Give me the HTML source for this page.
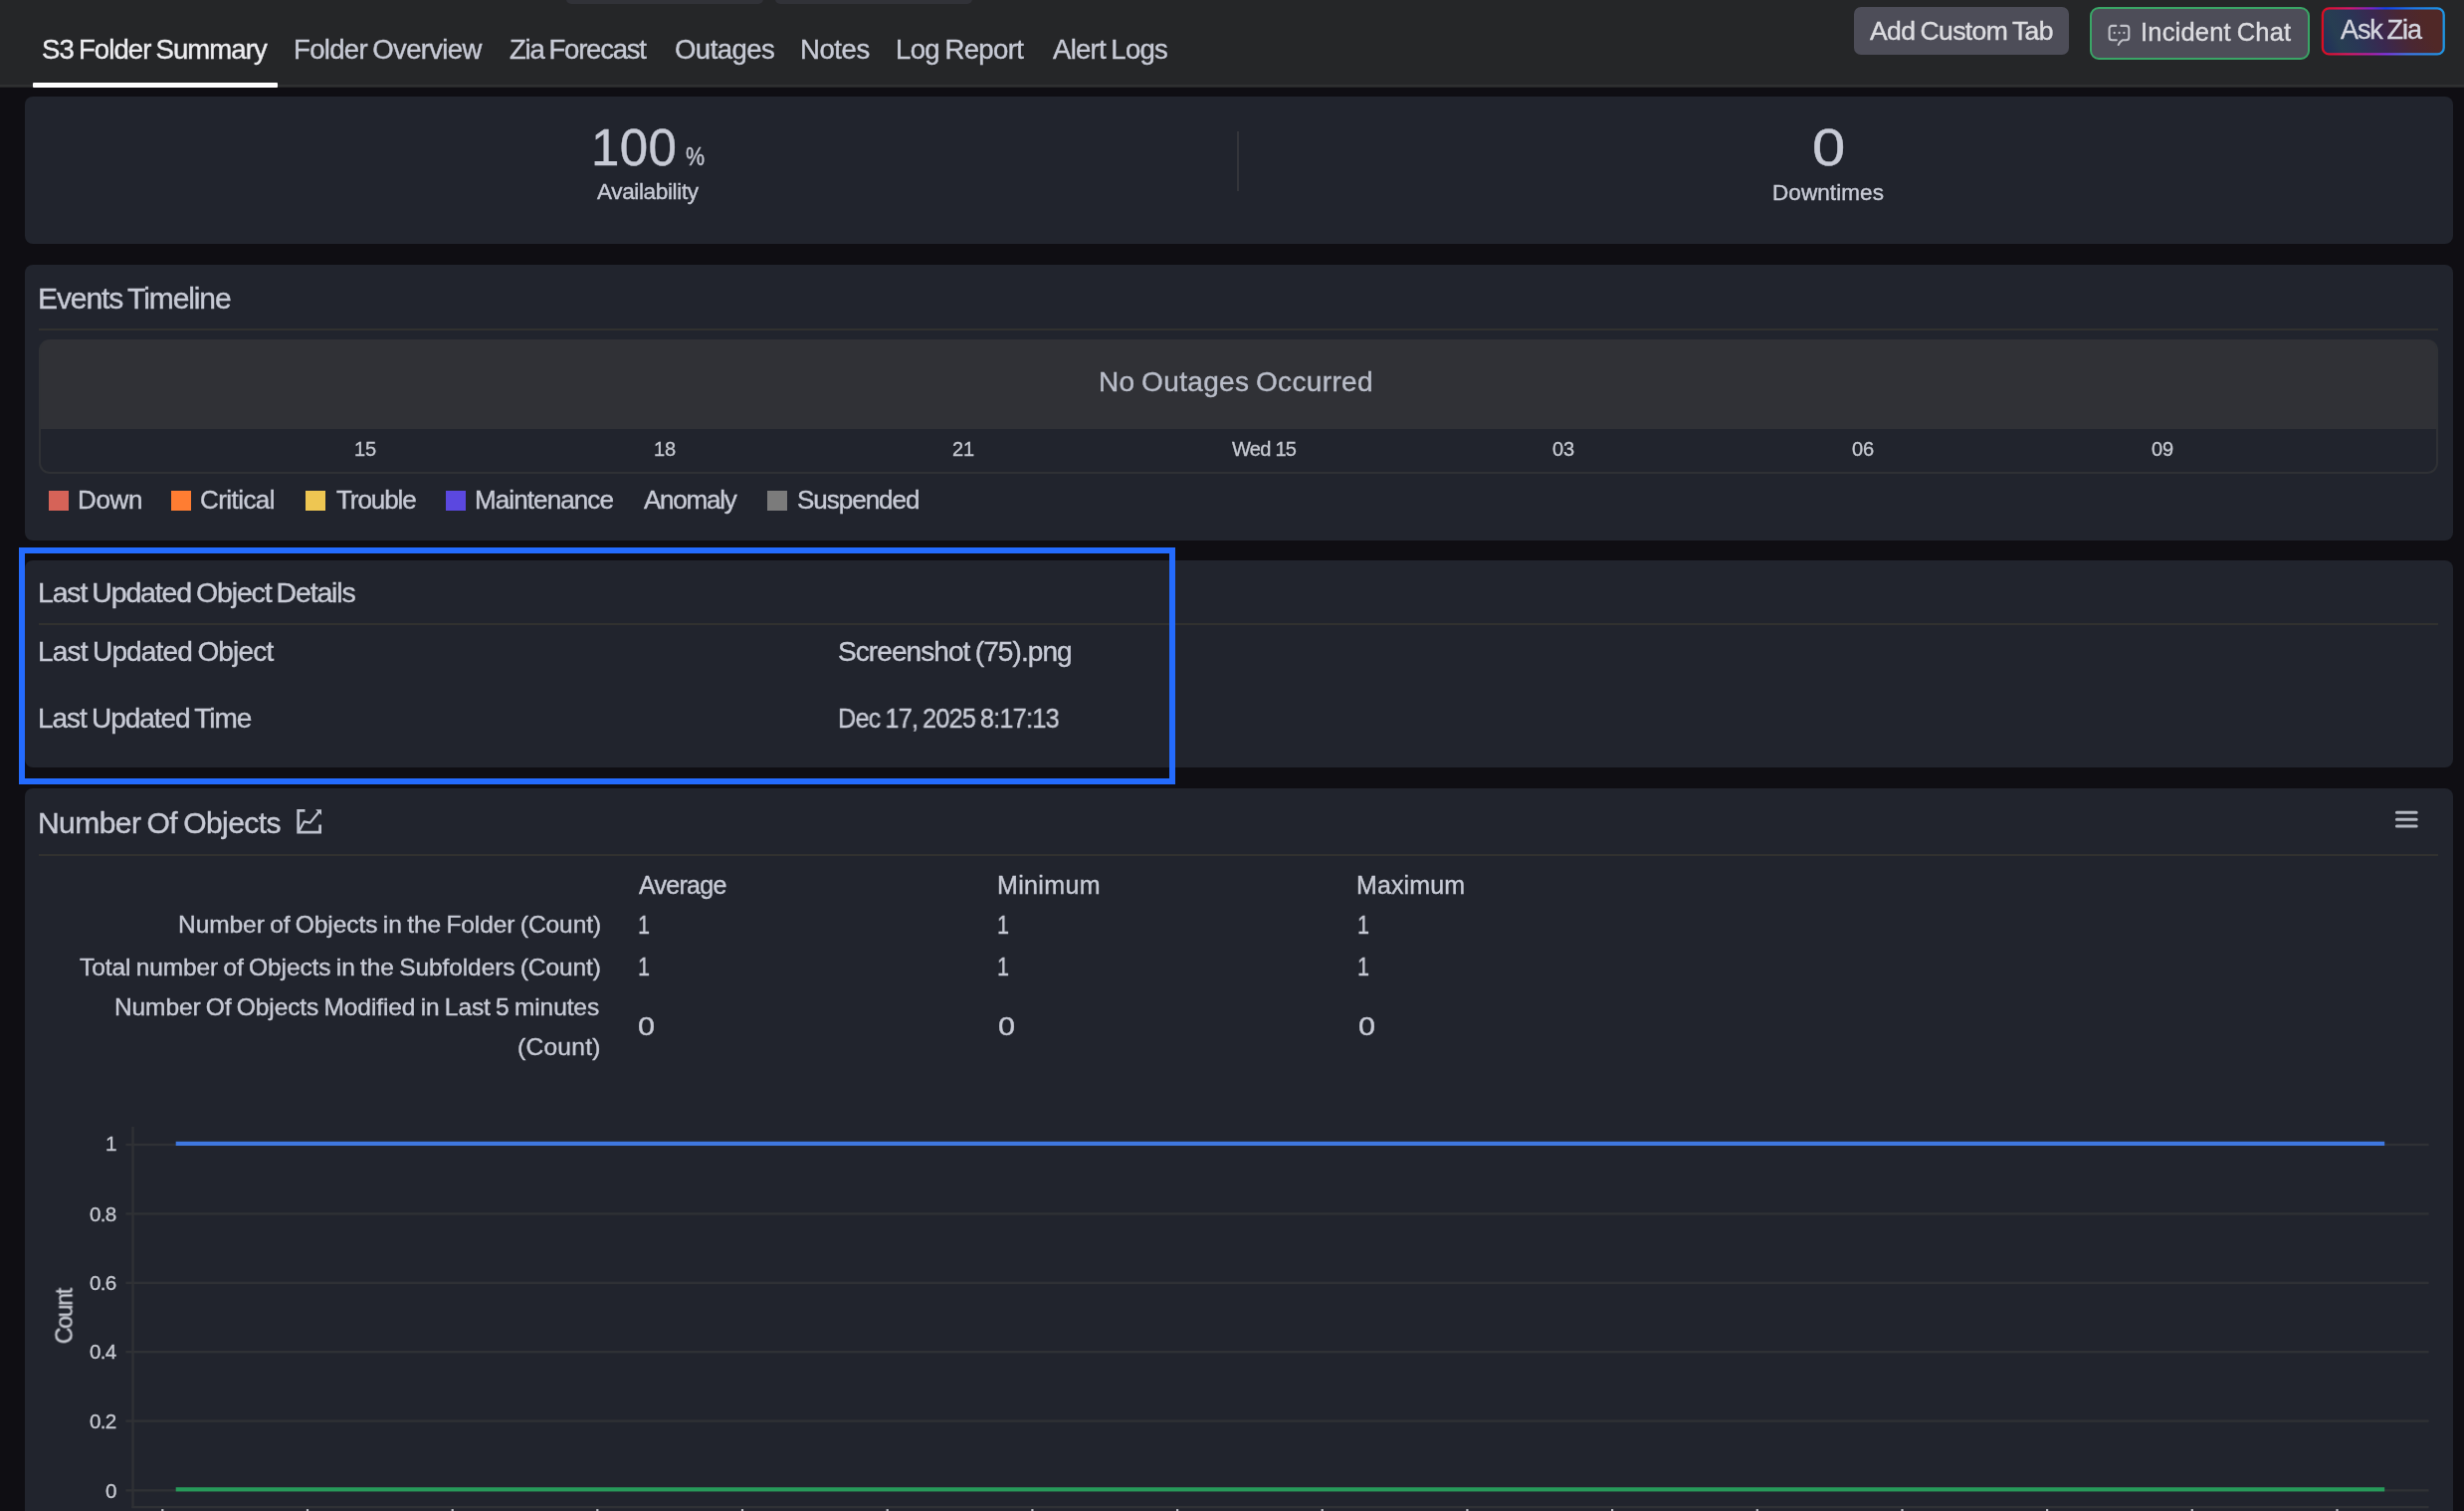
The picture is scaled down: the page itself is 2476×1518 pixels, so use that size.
<!DOCTYPE html><html lang="en"><head><meta charset="utf-8"><title>S3 Folder Summary</title>
<style>
*{box-sizing:border-box;margin:0;padding:0}
html,body{width:2476px;height:1518px;overflow:hidden;background:#0f0e13}
body{font-family:"Liberation Sans",sans-serif;}
#app{position:relative;width:2476px;height:1518px;overflow:hidden;background:#0f0e13}
.t{position:absolute;white-space:nowrap;line-height:1;display:block;font-weight:400;font-style:normal;font-family:inherit;background:none;border:0;padding:0;margin:0;text-decoration:none;text-align:left;-webkit-text-stroke:0.4px currentColor;will-change:transform}
.abs{position:absolute}
header{position:absolute;left:0;top:0;width:2476px;height:87.8px;background:linear-gradient(#252628 0,#252628 85.3px,#2f3031 85.3px,#2f3031 87.3px,#252628 87.3px)}
.stub{position:absolute;top:-10px;height:13.5px;background:#313238;border-radius:5px}
.underline{position:absolute;left:32.6px;top:83.2px;width:246.2px;height:4.5px;background:#fff;border-radius:1px}
button{font:inherit;color:inherit;border:0;padding:0;margin:0;background:none;text-align:left;overflow:visible;display:block}
.btn{position:absolute;border-radius:7px;background:#4d4d58}
.card{position:absolute;left:25px;width:2439.5px;background:#21242d;border-radius:8px}
.in{position:absolute;left:-25px;width:2476px;height:0}
.hr{position:absolute;left:38.7px;width:2411.5px;height:2px;background:#31312f}
.sq{position:absolute;top:493.2px;width:20.2px;height:20.2px}
</style></head><body><div id="app">
<header>
<div class="stub" style="left:569px;width:197.5px"></div><div class="stub" style="left:779px;width:198px"></div>
<nav>
<a class="t" style="left:41.80px;top:35.82px;font-size:27.5px;letter-spacing:-0.928px;color:#ededf0;word-spacing:-1.51px;">S3 Folder Summary</a>
<a class="t" style="left:295.00px;top:35.82px;font-size:27.5px;letter-spacing:-0.673px;color:#c7cad5;word-spacing:-1.51px;">Folder Overview</a>
<a class="t" style="left:512.00px;top:35.82px;font-size:27.5px;letter-spacing:-1.215px;color:#c7cad5;word-spacing:-1.51px;">Zia Forecast</a>
<a class="t" style="left:677.90px;top:35.82px;font-size:27.5px;letter-spacing:-0.518px;color:#c7cad5;">Outages</a>
<a class="t" style="left:804.30px;top:35.82px;font-size:27.5px;letter-spacing:-0.422px;color:#c7cad5;">Notes</a>
<a class="t" style="left:900.00px;top:35.82px;font-size:27.5px;letter-spacing:-0.634px;color:#c7cad5;word-spacing:-1.51px;">Log Report</a>
<a class="t" style="left:1058.00px;top:35.82px;font-size:27.5px;letter-spacing:-0.717px;color:#c7cad5;word-spacing:-1.51px;">Alert Logs</a>
<div class="underline"></div></nav>
<button class="btn" style="left:1862.7px;top:7.2px;width:216.6px;height:48px"><span class="t" style="left:16.20px;top:10.57px;font-size:26.5px;letter-spacing:-0.619px;color:#dcdce0;word-spacing:-1.46px;">Add Custom Tab</span></button>
<button class="btn" style="left:2099.6px;top:7.0px;width:221.5px;height:52.6px;border:2.2px solid #3aa566;border-radius:9px">
<svg class="abs" style="left:14.2px;top:12.8px" width="28" height="28" viewBox="0 0 28 28" fill="none" stroke="#bfc0c7" stroke-width="2.1" stroke-linecap="round" stroke-linejoin="round">
<path d="M10.3 3.9H6.4a2.8 2.8 0 0 0-2.8 2.8v8.7a2.8 2.8 0 0 0 2.8 2.8h4.4"/>
<path d="M15.3 3.9h5.2a2.8 2.8 0 0 1 2.8 2.8v8.7a2.8 2.8 0 0 1-2.8 2.8h-3.6l-2.6 2.2-1.6 2.6"/>
<g fill="#bfc0c7" stroke="none"><circle cx="8.7" cy="11" r="1.15"/><circle cx="13.6" cy="11" r="1.15"/><circle cx="18.4" cy="11" r="1.15"/></g></svg>
<span class="t" style="left:49.30px;top:10.61px;font-size:25.5px;letter-spacing:0.186px;color:#dcdce0;word-spacing:-1.40px;">Incident Chat</span></button>
<button class="abs" style="left:2330.0px;top:5.0px;width:130px;height:54px">
<svg class="abs" style="left:0;top:0" width="130" height="54" viewBox="0 0 130 54">
<defs>
<linearGradient id="zf" gradientUnits="userSpaceOnUse" x1="2" y1="50" x2="128" y2="2"><stop offset="0.02" stop-color="#1f2c5c"/><stop offset="0.16" stop-color="#273e52"/><stop offset="0.3" stop-color="#2a3656"/><stop offset="0.47" stop-color="#3a2850"/><stop offset="0.66" stop-color="#4a2733"/><stop offset="0.82" stop-color="#502827"/></linearGradient>
<linearGradient id="zt" x1="0" y1="0" x2="1" y2="0"><stop offset="0" stop-color="#d90f22"/><stop offset="0.22" stop-color="#d4186a"/><stop offset="0.4" stop-color="#7a25c8"/><stop offset="0.52" stop-color="#1340ea"/><stop offset="0.75" stop-color="#1d78e6"/><stop offset="1" stop-color="#1e96e4"/></linearGradient>
<linearGradient id="zb" x1="0" y1="0" x2="1" y2="0"><stop offset="0" stop-color="#d90f22"/><stop offset="0.2" stop-color="#d8185e"/><stop offset="0.4" stop-color="#b020a8"/><stop offset="0.52" stop-color="#8434e4"/><stop offset="0.7" stop-color="#3f78e8"/><stop offset="1" stop-color="#1e96e4"/></linearGradient>
<clipPath id="ct"><rect x="0" y="0" width="130" height="27"/></clipPath><clipPath id="cb"><rect x="0" y="27" width="130" height="27"/></clipPath>
</defs>
<rect x="3.9" y="3.4" width="121.8" height="46" rx="6.5" fill="url(#zf)"/>
<rect x="3.9" y="3.4" width="121.8" height="46" rx="6.5" fill="none" stroke="url(#zt)" stroke-width="2.3" clip-path="url(#ct)"/>
<rect x="3.9" y="3.4" width="121.8" height="46" rx="6.5" fill="none" stroke="url(#zb)" stroke-width="2.3" clip-path="url(#cb)"/>
</svg>
<span class="t" style="left:22.40px;top:12.14px;font-size:27px;letter-spacing:-1.103px;color:#d3d4de;word-spacing:-1.49px;">Ask Zia</span></button>
</header>
<section class="card" style="top:97.4px;height:147.9px"><div class="in" style="top:-97.4px"><div class="abs" style="left:1242.5px;top:131.5px;width:2px;height:60px;background:#34353a"></div><div class="stat"><span class="t" style="left:593.90px;top:122.83px;font-size:51px;letter-spacing:0.386px;color:#c7cad5;">100</span><span class="t" style="left:688.50px;top:144.84px;font-size:25px;color:#c7cad5;transform:scaleX(0.855);transform-origin:0 50%;">%</span><span class="t" style="left:600.40px;top:182.45px;font-size:22.5px;letter-spacing:-0.349px;color:#c7cad5;">Availability</span></div><div class="stat"><span class="t" style="left:1820.96px;top:123.33px;font-size:51px;color:#c7cad5;transform:scaleX(1.172);transform-origin:0 50%;">0</span><span class="t" style="left:1781.40px;top:182.65px;font-size:22.5px;letter-spacing:0.084px;color:#c7cad5;">Downtimes</span></div></div></section>
<section class="card" style="top:265.5px;height:277.7px"><div class="in" style="top:-265.5px"><h2 class="t" style="left:38.00px;top:284.61px;font-size:30px;letter-spacing:-1.105px;color:#c7cad5;word-spacing:-1.65px;">Events Timeline</h2><div class="hr" style="top:329.8px"></div><div class="abs" style="left:38.7px;top:341.4px;width:2411.5px;height:134.2px;border:2px solid #2f3135;border-top:0;border-radius:11px;background:linear-gradient(#303136 0,#303136 89.6px,#21242d 89.6px)"></div><div class="t" style="left:1104.00px;top:369.50px;font-size:28px;letter-spacing:0.350px;color:#b9bdc9;word-spacing:-1.54px;">No Outages Occurred</div><div class="axis"><span class="t" style="left:355.84px;top:440.87px;font-size:20px;letter-spacing:0.000px;color:#c5c8d0;-webkit-text-stroke:0.35px #c5c8d0;">15</span><span class="t" style="left:657.24px;top:440.87px;font-size:20px;letter-spacing:0.000px;color:#c5c8d0;-webkit-text-stroke:0.35px #c5c8d0;">18</span><span class="t" style="left:957.34px;top:440.87px;font-size:20px;letter-spacing:0.000px;color:#c5c8d0;-webkit-text-stroke:0.35px #c5c8d0;">21</span><span class="t" style="left:1237.50px;top:440.87px;font-size:20px;letter-spacing:-0.728px;color:#c5c8d0;-webkit-text-stroke:0.35px #c5c8d0;">Wed 15</span><span class="t" style="left:1559.94px;top:440.87px;font-size:20px;letter-spacing:0.000px;color:#c5c8d0;-webkit-text-stroke:0.35px #c5c8d0;">03</span><span class="t" style="left:1860.94px;top:440.87px;font-size:20px;letter-spacing:0.000px;color:#c5c8d0;-webkit-text-stroke:0.35px #c5c8d0;">06</span><span class="t" style="left:2161.54px;top:440.87px;font-size:20px;letter-spacing:0.000px;color:#c5c8d0;-webkit-text-stroke:0.35px #c5c8d0;">09</span></div><div class="legend"><i class="sq" style="left:48.7px;background:#d66358"></i><span class="t" style="left:77.60px;top:488.59px;font-size:26px;letter-spacing:-0.371px;color:#c7cad5;">Down</span><i class="sq" style="left:171.7px;background:#ff7d32"></i><span class="t" style="left:201.30px;top:488.59px;font-size:26px;letter-spacing:-0.567px;color:#c7cad5;">Critical</span><i class="sq" style="left:306.7px;background:#eec652"></i><span class="t" style="left:337.70px;top:488.59px;font-size:26px;letter-spacing:-1.072px;color:#c7cad5;">Trouble</span><i class="sq" style="left:447.6px;background:#5b48e0"></i><span class="t" style="left:476.90px;top:488.59px;font-size:26px;letter-spacing:-0.902px;color:#c7cad5;">Maintenance</span><span class="t" style="left:647.10px;top:488.59px;font-size:26px;letter-spacing:-1.243px;color:#c7cad5;">Anomaly</span><i class="sq" style="left:770.8px;background:#7b7b7b"></i><span class="t" style="left:800.70px;top:488.59px;font-size:26px;letter-spacing:-1.013px;color:#c7cad5;">Suspended</span></div></div></section>
<section class="card" style="top:563.2px;height:208.2px"><div class="in" style="top:-563.2px"><h2 class="t" style="left:37.60px;top:581.17px;font-size:28.5px;letter-spacing:-1.173px;color:#c7cad5;word-spacing:-1.57px;">Last Updated Object Details</h2><div class="hr" style="top:625.5px"></div><div class="row"><span class="t" style="left:37.60px;top:641.30px;font-size:28px;letter-spacing:-0.834px;color:#c7cad5;word-spacing:-1.54px;">Last Updated Object</span><span class="t" style="left:842.00px;top:641.30px;font-size:28px;letter-spacing:-0.916px;color:#c7cad5;word-spacing:-1.54px;">Screenshot (75).png</span></div><div class="row"><span class="t" style="left:37.60px;top:708.00px;font-size:28px;letter-spacing:-1.036px;color:#c7cad5;word-spacing:-1.54px;">Last Updated Time</span><span class="t" style="left:842.10px;top:708.00px;font-size:28px;letter-spacing:-0.837px;color:#c7cad5;word-spacing:-1.54px;transform:scaleX(0.9);transform-origin:0 50%;">Dec 17, 2025 8:17:13</span></div></div></section>
<div class="abs" style="left:18.6px;top:549.5px;width:1162px;height:238.2px;border:6.3px solid #246bfd"></div>
<section class="card" style="top:791.5px;height:760px"><div class="in" style="top:-791.5px"><h2 class="t" style="left:37.80px;top:812.40px;font-size:30px;letter-spacing:-0.553px;color:#c7cad5;word-spacing:-1.65px;">Number Of Objects</h2><svg class="abs" style="left:295px;top:808px" width="32" height="34" viewBox="0 0 32 34" fill="none" stroke="#bcc0cc" stroke-width="2.8">
<path d="M11.5 6.3H4.7V28.2H26.6V20.5"/>
<path d="M5.2 27.6L10.6 17.4L16.6 18.6L25.8 7.2" stroke-width="2.2" stroke-linejoin="round"/>
<path d="M22.2 5.2H28V11Z" fill="#bcc0cc" stroke="none"/></svg><svg class="abs" style="left:2404px;top:812px" width="30" height="24" viewBox="0 0 30 24" stroke="#b2b6c0" stroke-width="3" stroke-linecap="round"><path d="M4.4 4.3H24.2M4.4 11.2H24.2M4.4 18.1H24.2"/></svg><div class="hr" style="top:857.5px"></div><div class="thead"><span class="t" style="left:642.10px;top:876.54px;font-size:25px;letter-spacing:-0.727px;color:#c7cad5;">Average</span><span class="t" style="left:1001.70px;top:876.54px;font-size:25px;letter-spacing:0.356px;color:#c7cad5;">Minimum</span><span class="t" style="left:1363.30px;top:876.54px;font-size:25px;letter-spacing:0.115px;color:#c7cad5;">Maximum</span></div><div class="trow"><span class="t" style="left:178.50px;top:916.76px;font-size:24.5px;letter-spacing:-0.066px;color:#c7cad5;word-spacing:-1.35px;">Number of Objects in the Folder (Count)</span><span class="t" style="left:640.56px;top:916.91px;font-size:25.5px;color:#c7cad5;transform:scaleX(0.842);transform-origin:0 50%;">1</span><span class="t" style="left:1002.16px;top:916.91px;font-size:25.5px;color:#c7cad5;transform:scaleX(0.842);transform-origin:0 50%;">1</span><span class="t" style="left:1363.76px;top:916.91px;font-size:25.5px;color:#c7cad5;transform:scaleX(0.842);transform-origin:0 50%;">1</span></div><div class="trow"><span class="t" style="left:79.80px;top:959.56px;font-size:24.5px;letter-spacing:-0.096px;color:#c7cad5;word-spacing:-1.35px;">Total number of Objects in the Subfolders (Count)</span><span class="t" style="left:640.56px;top:959.21px;font-size:25.5px;color:#c7cad5;transform:scaleX(0.842);transform-origin:0 50%;">1</span><span class="t" style="left:1002.16px;top:959.21px;font-size:25.5px;color:#c7cad5;transform:scaleX(0.842);transform-origin:0 50%;">1</span><span class="t" style="left:1363.76px;top:959.21px;font-size:25.5px;color:#c7cad5;transform:scaleX(0.842);transform-origin:0 50%;">1</span></div><div class="trow"><span class="t" style="left:114.80px;top:999.56px;font-size:24.5px;letter-spacing:-0.105px;color:#c7cad5;word-spacing:-1.35px;">Number Of Objects Modified in Last 5 minutes</span><span class="t" style="left:520.20px;top:1039.76px;font-size:24.5px;letter-spacing:0.294px;color:#c7cad5;">(Count)</span><span class="t" style="left:641.40px;top:1018.81px;font-size:25.5px;color:#c7cad5;transform:scaleX(1.200);transform-origin:0 50%;">0</span><span class="t" style="left:1003.00px;top:1018.81px;font-size:25.5px;color:#c7cad5;transform:scaleX(1.200);transform-origin:0 50%;">0</span><span class="t" style="left:1364.60px;top:1018.81px;font-size:25.5px;color:#c7cad5;transform:scaleX(1.200);transform-origin:0 50%;">0</span></div><svg class="abs" style="left:0;top:1120px" width="2476" height="398" viewBox="0 1120 2476 398"><rect x="126.4" y="1148.8" width="2314.2" height="2.4" fill="#2f3135"/><rect x="126.4" y="1218.2" width="2314.2" height="2.4" fill="#2f3135"/><rect x="126.4" y="1287.6" width="2314.2" height="2.4" fill="#2f3135"/><rect x="126.4" y="1357.0" width="2314.2" height="2.4" fill="#2f3135"/><rect x="126.4" y="1426.4" width="2314.2" height="2.4" fill="#2f3135"/><rect x="126.4" y="1496.1" width="2314.2" height="2.4" fill="#2f3135"/><rect x="132.3" y="1132" width="2.4" height="383" fill="#2f3135"/><rect x="132.3" y="1512.9" width="2308.3" height="2.4" fill="#2f3135"/><rect x="162.2" y="1516.1" width="2.2" height="4" fill="#bfc2ca"/><rect x="307.9" y="1516.1" width="2.2" height="4" fill="#bfc2ca"/><rect x="453.6" y="1516.1" width="2.2" height="4" fill="#bfc2ca"/><rect x="599.2" y="1516.1" width="2.2" height="4" fill="#bfc2ca"/><rect x="744.9" y="1516.1" width="2.2" height="4" fill="#bfc2ca"/><rect x="890.6" y="1516.1" width="2.2" height="4" fill="#bfc2ca"/><rect x="1036.3" y="1516.1" width="2.2" height="4" fill="#bfc2ca"/><rect x="1182.0" y="1516.1" width="2.2" height="4" fill="#bfc2ca"/><rect x="1327.6" y="1516.1" width="2.2" height="4" fill="#bfc2ca"/><rect x="1473.3" y="1516.1" width="2.2" height="4" fill="#bfc2ca"/><rect x="1619.0" y="1516.1" width="2.2" height="4" fill="#bfc2ca"/><rect x="1764.7" y="1516.1" width="2.2" height="4" fill="#bfc2ca"/><rect x="1910.4" y="1516.1" width="2.2" height="4" fill="#bfc2ca"/><rect x="2056.0" y="1516.1" width="2.2" height="4" fill="#bfc2ca"/><rect x="2201.7" y="1516.1" width="2.2" height="4" fill="#bfc2ca"/><rect x="2347.4" y="1516.1" width="2.2" height="4" fill="#bfc2ca"/><rect x="176.7" y="1146.8" width="2219.5" height="4.2" fill="#3f78e0"/><rect x="176.7" y="1494.2" width="2219.5" height="4.2" fill="#27995a"/></svg><div class="yaxis"><span class="t" style="left:105.60px;top:1139.36px;font-size:20.6px;letter-spacing:0px;color:#c5c8d0;-webkit-text-stroke:0.35px #c5c8d0;">1</span><span class="t" style="left:89.83px;top:1209.66px;font-size:20.6px;letter-spacing:-0.7px;color:#c5c8d0;-webkit-text-stroke:0.35px #c5c8d0;">0.8</span><span class="t" style="left:89.83px;top:1278.96px;font-size:20.6px;letter-spacing:-0.7px;color:#c5c8d0;-webkit-text-stroke:0.35px #c5c8d0;">0.6</span><span class="t" style="left:89.83px;top:1348.36px;font-size:20.6px;letter-spacing:-0.7px;color:#c5c8d0;-webkit-text-stroke:0.35px #c5c8d0;">0.4</span><span class="t" style="left:89.83px;top:1417.76px;font-size:20.6px;letter-spacing:-0.7px;color:#c5c8d0;-webkit-text-stroke:0.35px #c5c8d0;">0.2</span><span class="t" style="left:105.60px;top:1487.56px;font-size:20.6px;letter-spacing:0px;color:#c5c8d0;-webkit-text-stroke:0.35px #c5c8d0;">0</span><span class="t" style="left:36.8px;top:1311.4px;width:56px;text-align:center;font-size:23px;letter-spacing:-1.3px;color:#c5c8d0;transform:rotate(-90deg);transform-origin:50% 50%">Count</span></div></div></section>
</div></body></html>
